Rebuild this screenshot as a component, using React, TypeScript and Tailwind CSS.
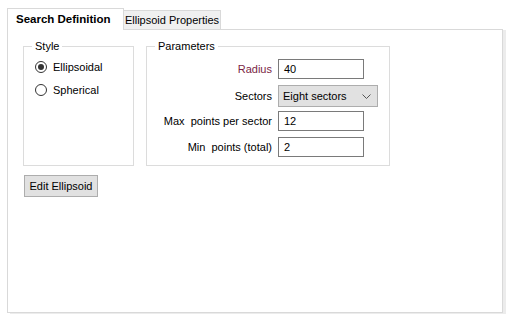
import React from "react";

function Radio({ checked, label }: { checked: boolean; label: string }) {
  return (
    <div className="flex items-center h-[12px]">
      <div className="w-[12px] h-[12px] rounded-full border border-[#333333] bg-white flex items-center justify-center">
        {checked && <div className="w-[6px] h-[6px] rounded-full bg-[#333333]" />}
      </div>
      <span className="ml-[6px] leading-none">{label}</span>
    </div>
  );
}

function Field({ value }: { value: string }) {
  return (
    <div className="w-[86px] h-[20px] border border-[#7a7a7a] bg-white flex items-center pl-[5px]">
      {value}
    </div>
  );
}

export default function App() {
  return (
    <div
      className="w-[509px] h-[323px] bg-white text-[11px] text-black pt-[8px] pl-[7px]"
      style={{ fontFamily: '"Liberation Sans", Arial, sans-serif' }}
    >
      <div className="flex items-end h-[21px]">
        <div className="relative z-10 w-[117px] h-[22px] -mb-px bg-white border-l border-t border-r border-[#d9d9d9] flex items-center pl-[8px] font-bold text-[11.5px]">
          Search Definition
        </div>
        <div className="w-[97px] h-[19px] bg-[#f0f0f0] border-t border-r border-[#d9d9d9] flex items-center justify-center">
          Ellipsoid Properties
        </div>
      </div>
      <div className="w-[496px] h-[284px] border border-[#d9d9d9] bg-white shadow-[3px_1px_0_#ececec] pl-[15px] pt-[16px]">
        <div className="flex gap-[12px]">
          <div className="relative w-[111px] h-[120px] border border-[#dcdcdc] pl-[11px] pt-[14px]">
            <span className="absolute -top-[8px] left-[8px] bg-white px-[3px] leading-[14px]">Style</span>
            <div className="flex flex-col gap-[11px]">
              <Radio checked label="Ellipsoidal" />
              <Radio checked={false} label="Spherical" />
            </div>
          </div>
          <div className="relative w-[244px] h-[120px] border border-[#dcdcdc] pt-[12px]">
            <span className="absolute -top-[8px] left-[8px] bg-white px-[3px] leading-[14px]">Parameters</span>
            <div className="flex items-center">
              <div className="w-[125px] text-right text-[#7b1f45]">Radius</div>
              <div className="ml-[6px]">
                <Field value="40" />
              </div>
            </div>
            <div className="flex items-center mt-[6px]">
              <div className="w-[125px] text-right">Sectors</div>
              <div className="ml-[6px] w-[100px] h-[22px] border border-[#adadad] bg-[#e1e1e1] flex items-center pl-[4px] justify-between pr-[6px]">
                <span>Eight sectors</span>
                <svg width="9" height="5" viewBox="0 0 9 5">
                  <path d="M0.5 0.5 L4.5 4.5 L8.5 0.5" fill="none" stroke="#555555" strokeWidth="1" />
                </svg>
              </div>
            </div>
            <div className="flex items-center mt-[4px]">
              <div className="w-[125px] text-right whitespace-pre">Max  points per sector</div>
              <div className="ml-[6px]">
                <Field value="12" />
              </div>
            </div>
            <div className="flex items-center mt-[6px]">
              <div className="w-[125px] text-right whitespace-pre">Min  points (total)</div>
              <div className="ml-[6px]">
                <Field value="2" />
              </div>
            </div>
          </div>
        </div>
        <div className="ml-[1px] mt-[9px] w-[74px] h-[22px] border border-[#adadad] bg-[#e1e1e1] flex items-center justify-center">
          Edit Ellipsoid
        </div>
      </div>
    </div>
  );
}
